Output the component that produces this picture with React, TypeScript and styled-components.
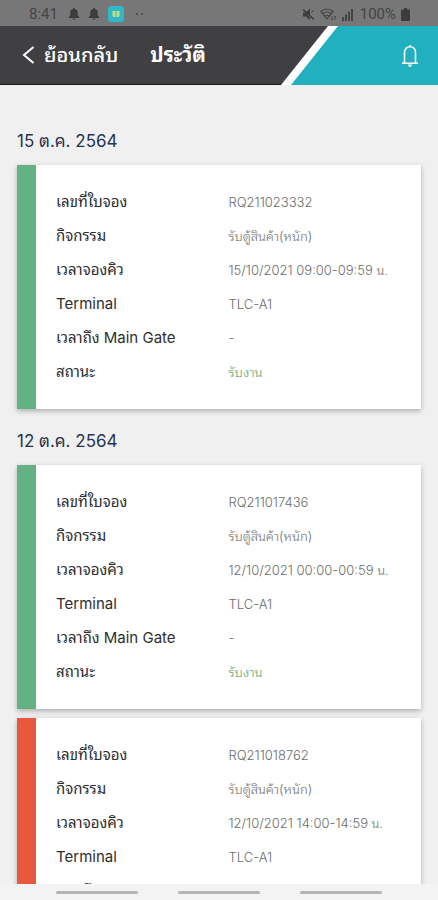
import React from "react";
import styled, { createGlobalStyle } from "styled-components";

const GlobalStyle = createGlobalStyle`
  *, *::before, *::after { box-sizing: border-box; }
  body {
    margin: 0;
    background: #f0f0f0;
    font-family: Inter, "Noto Sans Thai Looped", Loma, "Noto Sans Thai", "Noto Sans", sans-serif;
  }
`;

const Screen = styled.div`
  display: flex;
  flex-direction: column;
  height: 100vh;
  overflow: hidden;
`;

const StatusBar = styled.div`
  display: flex;
  flex: none;
  align-items: center;
  justify-content: space-between;
  height: 26px;
  padding: 2px 28px 0 29px;
  background: #777777;
  color: #454545;
  font-family: Roboto, sans-serif;
  font-size: 15px;
  line-height: 20px;
`;

const StatusGroup = styled.div<{ $gap: number }>`
  display: flex;
  align-items: center;
  gap: ${({ $gap }) => $gap}px;

  svg { display: block; }
`;

const Clock = styled.time`
  margin-right: 2px;
`;

const BatteryLevel = styled.span`
  margin-left: 2px;
`;

const Header = styled.header`
  display: flex;
  flex: none;
  height: 59px;
  background: #404042;
`;

const HeaderStart = styled.div`
  display: flex;
  flex: 1;
  align-items: center;
  gap: 32px;
  padding-left: 22px;
  border-bottom: 1px solid #1c1c1e;
`;

const BackButton = styled.button`
  display: flex;
  align-items: center;
  gap: 9px;
  padding: 0;
  border: 0;
  background: none;
  color: #ffffff;
  font-family: inherit;
  font-size: 20px;
  font-weight: 500;
  line-height: 28px;
  white-space: nowrap;
`;

const Title = styled.h1`
  margin: 0;
  color: #ffffff;
  font-size: 20px;
  font-weight: 700;
  line-height: 28px;
  white-space: nowrap;
`;

const HeaderEnd = styled.div`
  flex: none;
  width: 157px;
  background: #ffffff;
  clip-path: polygon(47px 0, 100% 0, 100% 100%, 0 100%);
`;

const TealPanel = styled.div`
  display: flex;
  align-items: center;
  justify-content: flex-end;
  height: 100%;
  padding-right: 19px;
  background: #20b0bf;
  clip-path: polygon(57px 0, 100% 0, 100% 100%, 10px 100%);
`;

const IconButton = styled.button`
  display: flex;
  padding: 0;
  border: 0;
  background: none;
  color: #ffffff;
`;

const Content = styled.main`
  display: flex;
  flex: 1;
  flex-direction: column;
  gap: 8px;
  min-height: 0;
  padding: 32px 17px;
  overflow-y: auto;
  scrollbar-width: none;
`;

const DayHeading = styled.h2`
  margin: 0;
  color: #26344f;
  font-size: 17px;
  font-weight: 400;
  line-height: 48px;
`;

const CardList = styled.div`
  display: flex;
  flex-direction: column;
  gap: 9px;
`;

const Card = styled.article<{ $accent: string }>`
  padding: 20px;
  border-left: 19px solid ${({ $accent }) => $accent};
  background: #ffffff;
  box-shadow: 0 2px 5px rgba(0, 0, 0, 0.28);
`;

const Details = styled.dl`
  margin: 0;
`;

const Row = styled.div`
  display: grid;
  grid-template-columns: 1fr 1fr;
  line-height: 34px;
  white-space: nowrap;
`;

const Label = styled.dt`
  color: #2e2e2e;
  font-size: 15px;
`;

const Value = styled.dd<{ $positive?: boolean }>`
  margin: 0;
  color: ${({ $positive }) => ($positive ? "#48a06d" : "#6c6c6c")};
  font-size: 13px;
  font-weight: 300;
`;

const NavBar = styled.nav`
  display: flex;
  flex: none;
  justify-content: space-between;
  height: 16px;
  padding: 7px 56px 0;
  background: #f3f3f3;
`;

const NavHandle = styled.button`
  width: 82px;
  height: 3px;
  padding: 0;
  border: 0;
  border-radius: 2px;
  background: #b5b5b5;
`;

const SmallBell = () => (
  <svg width="12" height="12" viewBox="0 0 12 12" fill="#3c3c3c" aria-hidden="true">
    <path d="M6 0C5.4 0 5 .4 5 1 3.200 1.400 2.200 2.900 2.200 4.800V7.500L.7 9.200V9.900H11.300V9.200L9.800 7.500V4.800C9.800 2.900 8.800 1.400 7 1 7 .4 6.600 0 6 0ZM4.700 10.500A1.300 1.300 0 0 0 7.300 10.500Z" />
  </svg>
);

const AppBadge = () => (
  <svg width="16" height="16" viewBox="0 0 16 16" aria-hidden="true">
    <rect width="16" height="16" rx="3" fill="#2fb9cb" />
    <path d="M4.500 5H7.500V11H5.500L4.500 10ZM8.500 5H11.500V10L10.500 11H8.500Z" fill="#c3df7c" />
  </svg>
);

const MoreDots = () => (
  <svg width="12" height="4" viewBox="0 0 12 4" fill="#454545" aria-hidden="true">
    <circle cx="5" cy="2" r="1" />
    <circle cx="10" cy="2" r="1" />
  </svg>
);

const MutedIcon = () => (
  <svg width="13" height="13" viewBox="0 0 13 13" fill="#3c3c3c" aria-hidden="true">
    <path d="M1 4.500H3.500L8 .8V8L3.500 5 6 7.500 8 9.500V12L4 8.500H1Z" />
    <path d="M1 1.500 12 11.500" stroke="#3c3c3c" strokeWidth="1.600" />
    <path d="M9.500 4.500 11.500 2.500" stroke="#3c3c3c" />
  </svg>
);

const WifiIcon = () => (
  <svg width="17" height="13" viewBox="0 0 17 13" fill="none" stroke="#444444" strokeWidth="1.200" aria-hidden="true">
    <path d="M1 3.500Q7 -1.500 13 3.500L7 11Z" />
    <path d="M3 5.500Q7 2.500 11 5.500M5 8Q7 6.500 9 8" />
    <path d="M12 8V12M10.800 10.800 12 12 13.200 10.800M15 12V8M13.800 9.200 15 8 16.200 9.200" strokeWidth=".8" />
  </svg>
);

const SignalIcon = () => (
  <svg width="11" height="13" viewBox="0 0 11 13" fill="#444444" aria-hidden="true">
    <path d="M0 9H2V13H0ZM3 6.500H5V13H3ZM6 3.500H8V13H6ZM9 1H11V13H9Z" />
  </svg>
);

const BatteryIcon = () => (
  <svg width="9" height="13" viewBox="0 0 9 13" fill="#3c3c3c" aria-hidden="true">
    <path d="M3 0H6V1.500H8Q9 1.500 9 2.500V12Q9 13 8 13H1Q0 13 0 12V2.500Q0 1.500 1 1.500H3Z" />
  </svg>
);

const ChevronLeft = () => (
  <svg width="13" height="18" viewBox="0 0 13 18" fill="none" stroke="currentColor" strokeWidth="2" aria-hidden="true">
    <path d="M11.500 1 2 9 11.500 17" />
  </svg>
);

const BellIcon = () => (
  <svg width="18" height="24" viewBox="0 0 18 24" fill="none" stroke="currentColor" strokeWidth="1.600" aria-hidden="true">
    <path d="M3.500 19V8.500C3.500 5 5.800 2.800 9 2.800S14.500 5 14.500 8.500V19" />
    <path d="M1 19.200H17M9 1V3" />
    <path d="M7 20.500H11L10.200 22.800H7.800Z" fill="currentColor" stroke="none" />
  </svg>
);

type Booking = {
  id: string;
  activity: string;
  queue: string;
  terminal: string;
  arrival: string;
  status: string;
  accent: string;
};

const GREEN = "#63b283";
const RED = "#e7593e";

const days: { date: string; bookings: Booking[] }[] = [
  {
    date: "15 ต.ค. 2564",
    bookings: [
      {
        id: "RQ211023332",
        activity: "รับตู้สินค้า(หนัก)",
        queue: "15/10/2021 09:00-09:59 น.",
        terminal: "TLC-A1",
        arrival: "-",
        status: "รับงาน",
        accent: GREEN,
      },
    ],
  },
  {
    date: "12 ต.ค. 2564",
    bookings: [
      {
        id: "RQ211017436",
        activity: "รับตู้สินค้า(หนัก)",
        queue: "12/10/2021 00:00-00:59 น.",
        terminal: "TLC-A1",
        arrival: "-",
        status: "รับงาน",
        accent: GREEN,
      },
      {
        id: "RQ211018762",
        activity: "รับตู้สินค้า(หนัก)",
        queue: "12/10/2021 14:00-14:59 น.",
        terminal: "TLC-A1",
        arrival: "-",
        status: "รับงาน",
        accent: RED,
      },
    ],
  },
];

const BookingCard = ({ booking }: { booking: Booking }) => (
  <Card $accent={booking.accent}>
    <Details>
      <Row><Label>เลขที่ใบจอง</Label><Value>{booking.id}</Value></Row>
      <Row><Label>กิจกรรม</Label><Value>{booking.activity}</Value></Row>
      <Row><Label>เวลาจองคิว</Label><Value>{booking.queue}</Value></Row>
      <Row><Label>Terminal</Label><Value>{booking.terminal}</Value></Row>
      <Row><Label>เวลาถึง Main Gate</Label><Value>{booking.arrival}</Value></Row>
      <Row><Label>สถานะ</Label><Value $positive>{booking.status}</Value></Row>
    </Details>
  </Card>
);

export default function App() {
  return (
    <Screen>
      <GlobalStyle />
      <StatusBar>
        <StatusGroup $gap={8}>
          <Clock>8:41</Clock>
          <SmallBell />
          <SmallBell />
          <AppBadge />
          <MoreDots />
        </StatusGroup>
        <StatusGroup $gap={5}>
          <MutedIcon />
          <WifiIcon />
          <SignalIcon />
          <BatteryLevel>100%</BatteryLevel>
          <BatteryIcon />
        </StatusGroup>
      </StatusBar>
      <Header>
        <HeaderStart>
          <BackButton type="button">
            <ChevronLeft />
            ย้อนกลับ
          </BackButton>
          <Title>ประวัติ</Title>
        </HeaderStart>
        <HeaderEnd>
          <TealPanel>
            <IconButton type="button" aria-label="การแจ้งเตือน">
              <BellIcon />
            </IconButton>
          </TealPanel>
        </HeaderEnd>
      </Header>
      <Content>
        {days.map((day) => (
          <section key={day.date}>
            <DayHeading>{day.date}</DayHeading>
            <CardList>
              {day.bookings.map((booking) => (
                <BookingCard key={booking.id} booking={booking} />
              ))}
            </CardList>
          </section>
        ))}
      </Content>
      <NavBar aria-label="ระบบ">
        <NavHandle type="button" aria-label="ล่าสุด" />
        <NavHandle type="button" aria-label="หน้าหลัก" />
        <NavHandle type="button" aria-label="กลับ" />
      </NavBar>
    </Screen>
  );
}
